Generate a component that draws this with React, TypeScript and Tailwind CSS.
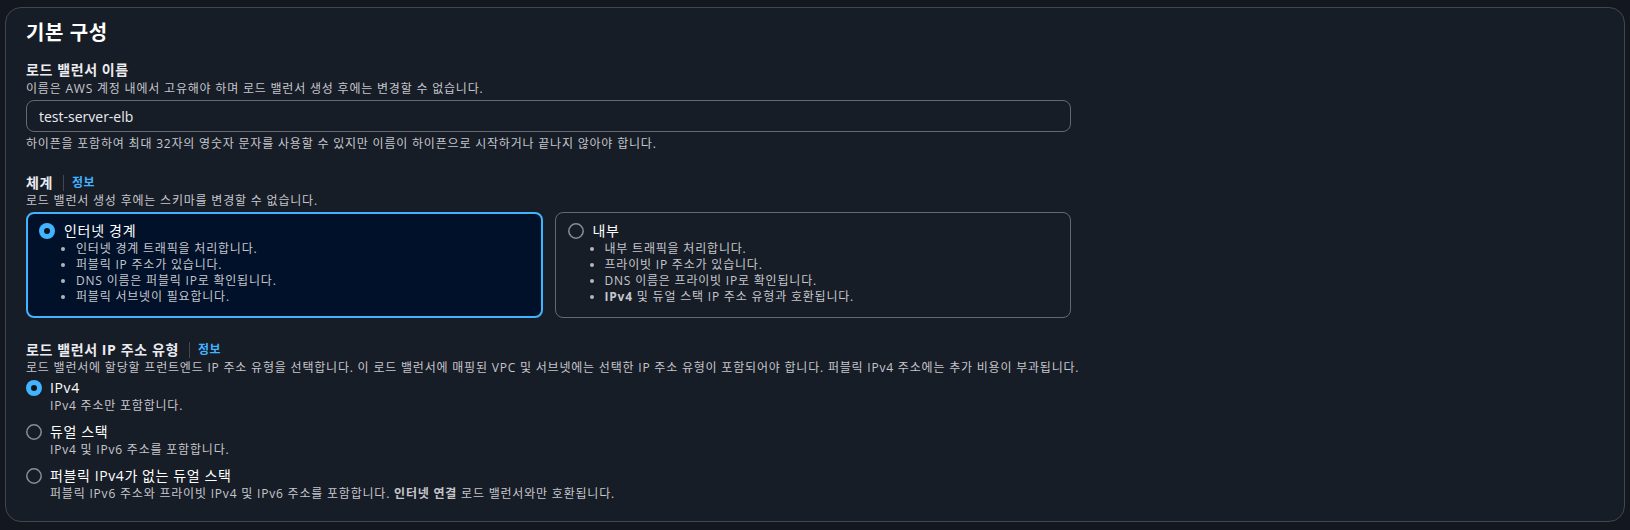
import React, { useState } from 'react';

const FONT = { fontFamily: '"Open Sans", "Noto Sans CJK KR", sans-serif' };

const SCHEMES = [
  {
    id: 'internet-facing',
    title: '인터넷 경계',
    items: [
      <>인터넷 경계 트래픽을 처리합니다.</>,
      <>퍼블릭 IP 주소가 있습니다.</>,
      <>DNS 이름은 퍼블릭 IP로 확인됩니다.</>,
      <>퍼블릭 서브넷이 필요합니다.</>,
    ],
  },
  {
    id: 'internal',
    title: '내부',
    items: [
      <>내부 트래픽을 처리합니다.</>,
      <>프라이빗 IP 주소가 있습니다.</>,
      <>DNS 이름은 프라이빗 IP로 확인됩니다.</>,
      <><b className="font-bold">IPv4</b> 및 듀얼 스택 IP 주소 유형과 호환됩니다.</>,
    ],
  },
];

const IP_TYPES = [
  { id: 'ipv4', label: 'IPv4', desc: <>IPv4 주소만 포함합니다.</> },
  { id: 'dualstack', label: '듀얼 스택', desc: <>IPv4 및 IPv6 주소를 포함합니다.</> },
  {
    id: 'dualstack-no-ipv4',
    label: '퍼블릭 IPv4가 없는 듀얼 스택',
    desc: <>퍼블릭 IPv6 주소와 프라이빗 IPv4 및 IPv6 주소를 포함합니다. <b className="font-bold">인터넷 연결</b> 로드 밸런서와만 호환됩니다.</>,
  },
];

const Radio = ({ checked }: { checked: boolean }) => (
  <svg width="16" height="16" viewBox="0 0 16 16" className="shrink-0">
    {checked ? (
      <>
        <circle cx="8" cy="8" r="8" fill="#42b4ff" />
        <circle cx="8" cy="8" r="3" fill="#0f141a" />
      </>
    ) : (
      <circle cx="8" cy="8" r="7.2" fill="none" stroke="#8c8c94" strokeWidth="1.5" />
    )}
  </svg>
);

const InfoLabel = ({ text }: { text: string }) => (
  <div className="flex items-center h-[20px]">
    <span className="text-[14px] leading-[20px] font-bold tracking-[0.6px] text-[#ebebf0]">{text}</span>
    <span className="ml-[10px] h-[16px] border-l border-[#424650]" />
    <a href="#" className="ml-[8px] text-[12px] leading-[16px] font-bold tracking-[0.6px] text-[#42b4ff]">정보</a>
  </div>
);

export default function App() {
  const [scheme, setScheme] = useState('internet-facing');
  const [ipType, setIpType] = useState('ipv4');

  return (
    <div className="min-h-[530px] bg-[#131820] pt-[7px] px-[5px]" style={FONT}>
      <div className="h-[515px] rounded-[16px] border border-[#424650] bg-[#171d26] px-[20px] pt-[13px]">
        <h2 className="text-[20px] leading-[24px] font-bold tracking-[0.6px] text-[#ffffff]">기본 구성</h2>

        {/* name */}
        <div className="mt-[15px]">
          <div className="text-[14px] leading-[20px] font-bold tracking-[0.6px] text-[#ebebf0]">로드 밸런서 이름</div>
          <div className="text-[12px] leading-[16px] tracking-[0.8px] text-[#c6c6cd] translate-y-[1px]">이름은 AWS 계정 내에서 고유해야 하며 로드 밸런서 생성 후에는 변경할 수 없습니다.</div>
          <input
            defaultValue="test-server-elb"
            className="mt-[4px] w-[1045px] h-[32px] rounded-[8px] border border-[#656871] bg-transparent px-[12px] text-[14px] text-[#ebebf0] outline-none"
            style={FONT}
          />
          <div className="mt-[4px] text-[12px] leading-[16px] tracking-[0.8px] text-[#c6c6cd]">하이픈을 포함하여 최대 32자의 영숫자 문자를 사용할 수 있지만 이름이 하이픈으로 시작하거나 끝나지 않아야 합니다.</div>
        </div>

        {/* scheme */}
        <div className="mt-[21px]">
          <InfoLabel text="체계" />
          <div className="text-[12px] leading-[16px] tracking-[0.8px] text-[#c6c6cd]">로드 밸런서 생성 후에는 스키마를 변경할 수 없습니다.</div>
          <div className="mt-[3px] w-[1045px] grid grid-cols-2 gap-[12px]">
            {SCHEMES.map((s) => {
              const on = scheme === s.id;
              return (
                <div
                  key={s.id}
                  onClick={() => setScheme(s.id)}
                  className={
                    on
                      ? 'h-[106px] rounded-[8px] border-2 border-[#42b4ff] bg-[#001129] pl-[11px] pr-[11px] pt-[7px] cursor-pointer'
                      : 'h-[106px] rounded-[8px] border border-[#656871] pl-[12px] pr-[12px] pt-[8px] cursor-pointer'
                  }
                >
                  <div className="flex items-center gap-[9px] h-[20px]">
                    <Radio checked={on} />
                    <span className="text-[14px] leading-[20px] tracking-[0.7px] text-[#ffffff]">{s.title}</span>
                  </div>
                  <ul>
                    {s.items.map((it, i) => (
                      <li key={i} className="flex items-center h-[16px] text-[12px] leading-[16px] tracking-[0.8px] text-[#c6c6cd]">
                        <span className="ml-[22px] w-[4px] h-[4px] rounded-full bg-[#b4b4bb] shrink-0" />
                        <span className="ml-[11px]">{it}</span>
                      </li>
                    ))}
                  </ul>
                </div>
              );
            })}
          </div>
        </div>

        {/* ip address type */}
        <div className="mt-[22px]">
          <InfoLabel text="로드 밸런서 IP 주소 유형" />
          <div className="text-[12px] leading-[16px] tracking-[0.8px] text-[#c6c6cd] whitespace-nowrap">로드 밸런서에 할당할 프런트엔드 IP 주소 유형을 선택합니다. 이 로드 밸런서에 매핑된 VPC 및 서브넷에는 선택한 IP 주소 유형이 포함되어야 합니다. 퍼블릭 IPv4 주소에는 추가 비용이 부과됩니다.</div>
          <div className="mt-[2px] flex flex-col gap-[8px]">
            {IP_TYPES.map((t) => (
              <div key={t.id} onClick={() => setIpType(t.id)} className="cursor-pointer">
                <div className="flex items-center gap-[8px] h-[20px]">
                  <Radio checked={ipType === t.id} />
                  <span className="text-[14px] leading-[20px] tracking-[0.6px] text-[#ffffff]">{t.label}</span>
                </div>
                <div className="pl-[24px] text-[12px] leading-[16px] tracking-[0.8px] text-[#c6c6cd]">{t.desc}</div>
              </div>
            ))}
          </div>
        </div>
      </div>
    </div>
  );
}
